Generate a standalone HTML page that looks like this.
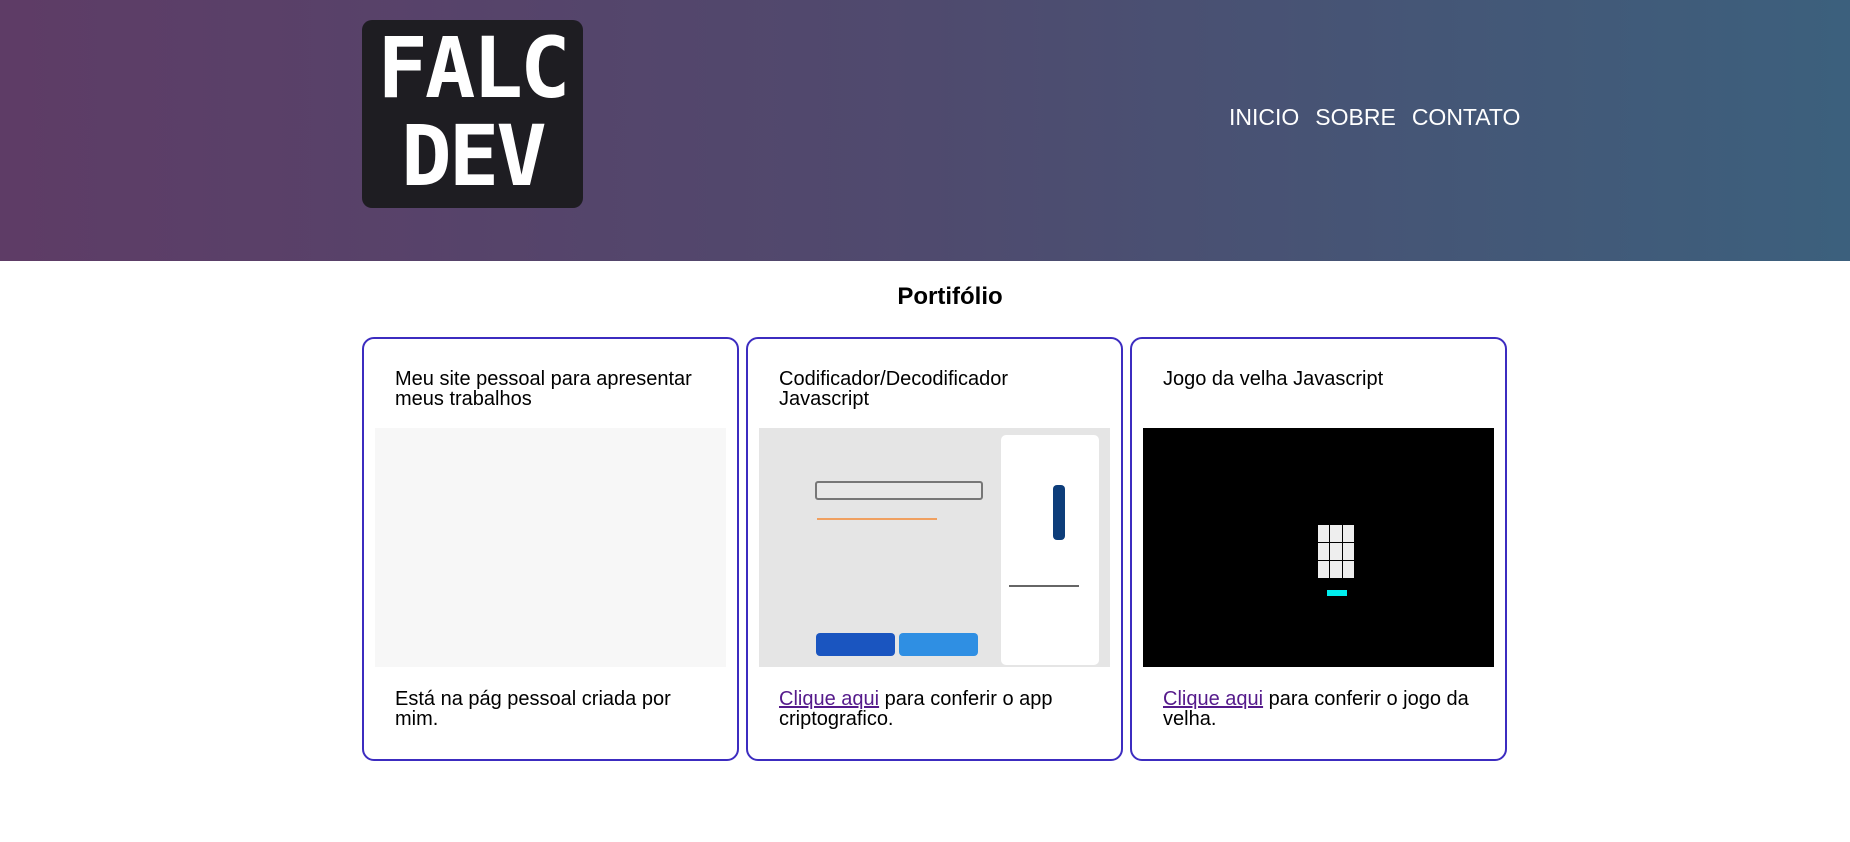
<!DOCTYPE html>
<html><head><meta charset="utf-8"><style>
*{box-sizing:border-box;margin:0;padding:0}
body{width:1850px;height:842px;background:#fff;font-family:"Liberation Sans",Arial,sans-serif;position:relative;overflow:hidden}
header{position:absolute;left:0;top:0;width:1850px;height:261px;background:linear-gradient(90deg,#5e3c66 0%,#4f4a6e 50%,#3c607d 100%)}
.logo{position:absolute;left:362px;top:20px;width:221px;height:188px;background:#1e1d22;border-radius:10px;color:#fff;font-family:"DejaVu Sans Mono",monospace;font-weight:bold;text-align:center;font-size:84px;line-height:88px;letter-spacing:-3px;padding-top:4px}
nav{position:absolute;left:1229px;top:104px;color:#fff;font-size:23px}
nav span{margin-right:16px}
h2{position:absolute;left:850px;width:200px;top:283px;text-align:center;font-size:24px;font-weight:bold;color:#000}
.card{position:absolute;top:337px;width:377px;height:424px;border:2px solid #3c2cc0;border-radius:12px}
.t{position:absolute;left:31px;top:30px;font-size:20px;line-height:20px;width:315px;color:#000}
.img{position:absolute;left:11px;top:89px;width:351px;height:239px}
.b{position:absolute;left:31px;top:350px;font-size:20px;line-height:20px;width:315px;color:#000}
a{color:#551a8b}
</style></head><body>
<header>
<div class="logo">FALC<br>DEV</div>
<nav><span>INICIO</span><span>SOBRE</span><span>CONTATO</span></nav>
</header>
<h2>Portifólio</h2>
<div class="card" style="left:362px">
<div class="t">Meu site pessoal para apresentar meus trabalhos</div>
<div class="img" style="background:#f7f7f7"></div>
<div class="b">Está na pág pessoal criada por mim.</div>
</div>
<div class="card" style="left:746px">
<div class="t">Codificador/Decodificador Javascript</div>
<div class="img" style="background:#e5e5e5">
<div style="position:absolute;left:56px;top:53px;width:168px;height:19px;border:2px solid #777;border-radius:3px;background:#e8e8e8"></div>
<div style="position:absolute;left:58px;top:90px;width:120px;height:2px;background:#f0a060"></div>
<div style="position:absolute;left:57px;top:205px;width:79px;height:23px;background:#1a55c0;border-radius:4px"></div>
<div style="position:absolute;left:140px;top:205px;width:79px;height:23px;background:#2f8fe3;border-radius:4px"></div>
<div style="position:absolute;left:242px;top:7px;width:98px;height:230px;background:#fff;border-radius:5px">
<div style="position:absolute;left:52px;top:50px;width:12px;height:55px;background:#0d3d7a;border-radius:4px"></div>
<div style="position:absolute;left:8px;top:150px;width:70px;height:2px;background:#666"></div>
</div>
</div>
<div class="b"><a href="#">Clique aqui</a> para conferir o app criptografico.</div>
</div>
<div class="card" style="left:1130px">
<div class="t">Jogo da velha Javascript</div>
<div class="img" style="background:#000">
<div style="position:absolute;left:175px;top:97px;width:36px;height:53px;display:grid;grid-template-columns:repeat(3,1fr);gap:1px">
<div style="background:#eee"></div><div style="background:#eee"></div><div style="background:#eee"></div>
<div style="background:#eee"></div><div style="background:#eee"></div><div style="background:#eee"></div>
<div style="background:#eee"></div><div style="background:#eee"></div><div style="background:#eee"></div>
</div>
<div style="position:absolute;left:184px;top:162px;width:20px;height:6px;background:#0ee"></div>
</div>
<div class="b"><a href="#">Clique aqui</a> para conferir o jogo da velha.</div>
</div>
</body></html>
